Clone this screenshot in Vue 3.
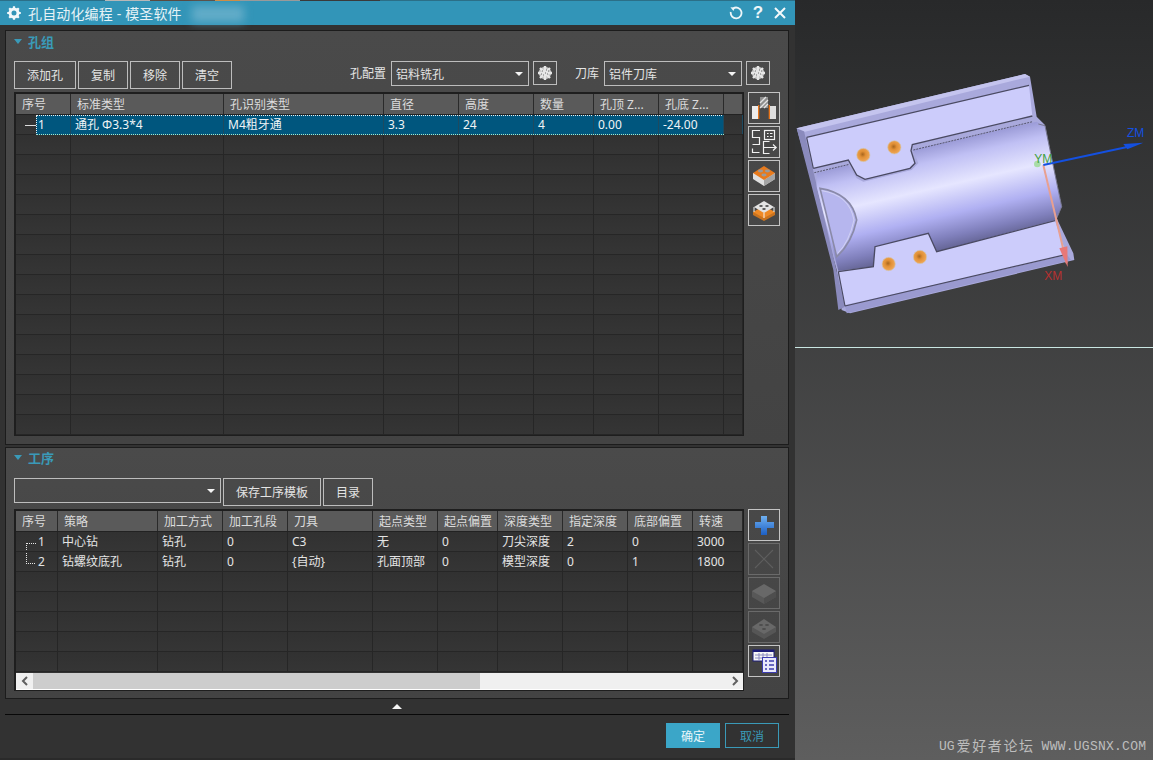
<template>
  <div class="screen">
    <div class="dialog">
      <div class="titlebar">
        <svg class="title-gear" width="16" height="16" viewBox="0 0 16 16">
          <circle cx="8" cy="8" r="4" fill="none" stroke="#f2f8fb" stroke-width="3" />
          <path d="M8 1.2v2.4M8 12.4v2.4M1.2 8h2.4M12.4 8h2.4M3.2 3.2l1.7 1.7M11.1 11.1l1.7 1.7M3.2 12.8l1.7-1.7M11.1 4.9l1.7-1.7" stroke="#f2f8fb" stroke-width="2.2" />
        </svg>
        <span class="title-text">孔自动化编程 - 模圣软件</span>
        <span class="title-blur"></span>
        <div class="title-actions">
          <svg width="14" height="14" viewBox="0 0 14 14">
            <path d="M4.2 2.4A5.4 5.4 0 1 1 1.8 6" fill="none" stroke="#eef6f9" stroke-width="1.8" />
            <path d="M1.4 1.2l4.6 0.2-1.6 3.6z" fill="#eef6f9" />
          </svg>
          <span class="help">?</span>
          <svg width="14" height="14" viewBox="0 0 14 14">
            <path d="M2 2l10 10M12 2L2 12" stroke="#f4f9fb" stroke-width="2" />
          </svg>
        </div>
      </div>

      <section class="panel panel-holes">
        <div class="panel-head"><i class="tri"></i><span>孔组</span></div>
        <div class="toolbar">
          <button v-for="b in holeButtons" :key="b" class="btn" :class="{ wide: b === '添加孔' }">{{ b }}</button>
          <span class="field-label first">孔配置</span>
          <div class="select"><span>铝料铣孔</span><i class="caret"></i></div>
          <button class="gear-btn">
            <svg width="20" height="20" viewBox="0 0 20 20">
              <circle cx="10" cy="10" r="6.2" fill="#c4c4c4" />
              <path d="M10 3v14M3 10h14M5 5l10 10M15 5L5 15" stroke="#e6e6e6" stroke-width="2.4" />
              <path d="M7 8h1M11 7h1M8 12h1M12 11h1M10 10h1M6 11h1M13 8h1" stroke="#6e6e6e" stroke-width="1" />
            </svg>
          </button>
          <span class="field-label second">刀库</span>
          <div class="select"><span>铝件刀库</span><i class="caret"></i></div>
          <button class="gear-btn">
            <svg width="20" height="20" viewBox="0 0 20 20">
              <circle cx="10" cy="10" r="6.2" fill="#c4c4c4" />
              <path d="M10 3v14M3 10h14M5 5l10 10M15 5L5 15" stroke="#e6e6e6" stroke-width="2.4" />
              <path d="M7 8h1M11 7h1M8 12h1M12 11h1M10 10h1M6 11h1M13 8h1" stroke="#6e6e6e" stroke-width="1" />
            </svg>
          </button>
        </div>
        <div class="table-row">
          <div class="grid-table">
            <div class="tr th" :style="{ gridTemplateColumns: holeCols }">
              <div v-for="(h, i) in holeHeads" :key="i" class="cell">{{ h }}</div>
            </div>
            <div
              v-for="(row, r) in holeRows"
              :key="r"
              class="tr td"
              :class="{ selected: r === 0 }"
              :style="{ gridTemplateColumns: holeCols }"
            >
              <div v-for="(c, i) in row" :key="i" class="cell" :class="{ num: i === 0 }">
                <i v-if="r === 0 && i === 0" class="dash"></i>{{ c }}
              </div>
            </div>
          </div>
          <div class="side">
            <button class="side-btn">
              <svg width="30" height="30" viewBox="0 0 30 30">
                <rect x="11" y="4" width="8" height="11" fill="#8e8e8e" />
                <path d="M11 10l6-6M11 15l8-8M15 15l4-4" stroke="#e4e4e4" stroke-width="1.3" />
                <rect x="3" y="13" width="6" height="13" fill="#ececec" />
                <rect x="21" y="13" width="6" height="13" fill="#dedede" />
                <rect x="9" y="12" width="1.3" height="14" fill="#e8751a" />
                <rect x="19.7" y="12" width="1.3" height="14" fill="#e8751a" />
              </svg>
            </button>
            <button class="side-btn">
              <svg width="30" height="30" viewBox="0 0 30 30" fill="none" stroke="#f2f2f2" stroke-width="1.2">
                <path d="M11 3.5H3.5v7h7v7h-7" />
                <path d="M3.5 21.5v4h7" />
                <rect x="15.5" y="3.5" width="10" height="9" />
                <path d="M18 6.5h1.6M21 6.5h2.5M18 9.5h1.6M21 9.5h2.5" />
                <path d="M20.5 14.5h-6v12h6M15 20.5h12M24 17.5l3.2 3-3.2 3" />
              </svg>
            </button>
            <button class="side-btn">
              <svg width="30" height="30" viewBox="0 0 30 30">
                <path d="M4 12v6l11 7 11-7v-6z" fill="#e0e0e0" />
                <path d="M15 19v6l11-7v-6z" fill="#a4a4a4" />
                <path d="M15 5L4 12l11 7 11-7z" fill="#e87a1c" />
                <ellipse cx="11.5" cy="10" rx="2.6" ry="1.4" fill="#9a9a9a" />
                <ellipse cx="18.5" cy="10" rx="2.6" ry="1.4" fill="#9a9a9a" />
                <ellipse cx="15" cy="14" rx="2.6" ry="1.4" fill="#9a9a9a" />
              </svg>
            </button>
            <button class="side-btn">
              <svg width="30" height="30" viewBox="0 0 30 30">
                <path d="M4 17v3l11 6 11-6v-3z" fill="#c9731f" />
                <path d="M15 11L4 17l11 6 11-6z" fill="#ef8a26" />
                <path d="M15 6L5 12l10 6 10-6z" fill="#e4e4e4" />
                <path d="M15 18v5M5 12v5M25 12v5" stroke="#f4f4f4" stroke-width="1" />
                <ellipse cx="12" cy="11" rx="1.8" ry="1" fill="#555" />
                <ellipse cx="18" cy="11" rx="1.8" ry="1" fill="#555" />
                <ellipse cx="15" cy="14" rx="1.8" ry="1" fill="#555" />
              </svg>
            </button>
          </div>
        </div>
      </section>

      <section class="panel panel-steps">
        <div class="panel-head"><i class="tri"></i><span>工序</span></div>
        <div class="toolbar">
          <div class="select template"><span></span><i class="caret"></i></div>
          <button class="btn save">保存工序模板</button>
          <button class="btn">目录</button>
        </div>
        <div class="table-row">
          <div class="grid-table">
            <div class="tr th" :style="{ gridTemplateColumns: stepCols }">
              <div v-for="(h, i) in stepHeads" :key="i" class="cell">{{ h }}</div>
            </div>
            <div v-for="(row, r) in stepRows" :key="r" class="tr td" :style="{ gridTemplateColumns: stepCols }">
              <div v-for="(c, i) in row" :key="i" class="cell" :class="{ num: i === 0 }">
                <i v-if="i === 0 && r === 0" class="branch first-branch"></i>
                <i v-if="i === 0 && r === 1" class="branch last-branch"></i>{{ c }}
              </div>
            </div>
            <div class="hscroll">
              <span class="arrow left">
                <svg width="8" height="10" viewBox="0 0 8 10"><path d="M6 1L2 5l4 4" fill="none" stroke="#606060" stroke-width="2" /></svg>
              </span>
              <span class="thumb"></span>
              <span class="arrow right">
                <svg width="8" height="10" viewBox="0 0 8 10"><path d="M2 1l4 4-4 4" fill="none" stroke="#606060" stroke-width="2" /></svg>
              </span>
            </div>
          </div>
          <div class="side">
            <button class="side-btn">
              <svg width="30" height="30" viewBox="0 0 30 30">
                <defs>
                  <linearGradient id="plusBlue" x1="0" y1="0" x2="0" y2="1">
                    <stop offset="0" stop-color="#6fb0f0" />
                    <stop offset="1" stop-color="#1c5fc4" />
                  </linearGradient>
                </defs>
                <path d="M12 6h6v6h7v6h-7v7h-6v-7H6v-6h6z" fill="url(#plusBlue)" />
              </svg>
            </button>
            <button class="side-btn off">
              <svg width="30" height="30" viewBox="0 0 30 30"><path d="M6 6l18 18M24 6L6 24" stroke="#5e5e5e" stroke-width="1.2" /></svg>
            </button>
            <button class="side-btn off">
              <svg width="30" height="30" viewBox="0 0 30 30">
                <path d="M3 13v6l12 7 12-7v-6z" fill="#585858" />
                <path d="M15 20v6l12-7v-6z" fill="#4e4e4e" />
                <path d="M15 6L3 13l12 7 12-7z" fill="#686868" />
              </svg>
            </button>
            <button class="side-btn off">
              <svg width="30" height="30" viewBox="0 0 30 30">
                <path d="M3 15v5l12 7 12-7v-5z" fill="#565656" />
                <path d="M15 7L3 15l12 7 12-7z" fill="#686868" />
                <ellipse cx="12" cy="13" rx="2" ry="1.1" fill="#4c4c4c" />
                <ellipse cx="18" cy="13" rx="2" ry="1.1" fill="#4c4c4c" />
                <ellipse cx="15" cy="17" rx="2" ry="1.1" fill="#4c4c4c" />
              </svg>
            </button>
            <button class="side-btn">
              <svg width="30" height="30" viewBox="0 0 30 30">
                <rect x="4" y="4" width="21" height="11" fill="#f6f6f6" stroke="#1c1c78" />
                <rect x="4" y="4" width="21" height="2" fill="#1c1c78" />
                <path d="M6 9h17M6 12h17M10 7v7M14 7v7M18 7v7" stroke="#8a8ac0" stroke-width="1" />
                <rect x="13.5" y="11.5" width="14" height="15" fill="#e8e8fa" stroke="#3c3cb0" />
                <path d="M16 15h2M16 19h2M16 23h2M20 15h5M20 19h5M20 23h5" stroke="#3c3cb0" stroke-width="1.4" />
              </svg>
            </button>
          </div>
        </div>
      </section>

      <div class="collapse"><i></i></div>
      <div class="footer">
        <button class="ok">确定</button>
        <button class="cancel">取消</button>
      </div>
    </div>

    <div class="viewport">
      <svg class="model" width="358" height="300" viewBox="0 0 1074 900">
        <defs>
          <linearGradient id="barrel" gradientUnits="userSpaceOnUse" x1="395" y1="235" x2="475" y2="585">
            <stop offset="0" stop-color="#8888c8" />
            <stop offset="0.2" stop-color="#c0c0f4" />
            <stop offset="0.42" stop-color="#e6e6ff" />
            <stop offset="0.66" stop-color="#b0b0f2" />
            <stop offset="0.84" stop-color="#8080bc" />
            <stop offset="1" stop-color="#55557f" />
          </linearGradient>
          <radialGradient id="hole" cx="0.45" cy="0.45" r="0.55">
            <stop offset="0" stop-color="#a8661f" />
            <stop offset="0.4" stop-color="#e08f35" />
            <stop offset="1" stop-color="#f0a858" />
          </radialGradient>
        </defs>
        <path d="M5 205L690 42l15 8 20 120 25 25 50 245-15 35 50 105 3 20-673 160-25-10-15-120z" fill="#a9a9dc" />
        <path d="M5 205l20 0 125 535-20 10-15-120z" fill="#8a8abc" />
        <path d="M5 205L690 42l15 8L30 215z" fill="#c4c4ee" />
        <path d="M150 738l665-155 13 17-673 160z" fill="#9a9ad0" />
        <path d="M35 232L702 76l10 92-360 86-4 18 12 38-15 15-135 33-25-13-25-45-105 25z" fill="#ccccfb" />
        <path d="M65 340l95-25 25 40 20 10 145-35 20-20-15-40 370-85 25 15 50 240-20 40-355 95-25-55-160 40-5 60-105 12-65-252z" fill="url(#barrel)" />
        <path d="M235 620l5-60 160-40 25 55 355-93 35 103-665 150-20-100z" fill="#ccccfb" />
        <path d="M75 385Q170 400 185 480 170 550 125 590z" fill="#b6b6ee" stroke="#8a8aa8" stroke-width="5" />
        <path d="M80 392Q163 405 177 480 163 545 128 580" fill="none" stroke="#e0e0f6" stroke-width="2" />
        <path d="M35 232L702 76M150 738L815 583M35 232l20 93M130 635l20 103" fill="none" stroke="#4a4a62" stroke-width="3.5" />
        <path d="M55 325l105-25 25 45 25 13 135-33 15-15-12-38 4-18 360-86" fill="none" stroke="#4a4a62" stroke-width="4" />
        <path d="M58 338l105-25M355 270l358-85" fill="none" stroke="#55556e" stroke-width="3" stroke-dasharray="6 3" />
        <path d="M130 635l105-15 5-60 160-40 25 55 355-93" fill="none" stroke="#4a4a62" stroke-width="4" />
        <path d="M730 192l20 5 50 243-15 35" fill="none" stroke="#77778f" stroke-width="3" />
        <g stroke="#cfc6ba" stroke-width="2">
          <circle cx="205" cy="285" r="20" fill="url(#hole)" />
          <circle cx="298" cy="262" r="20" fill="url(#hole)" />
          <circle cx="281" cy="612" r="20" fill="url(#hole)" />
          <circle cx="375" cy="591" r="20" fill="url(#hole)" />
        </g>
        <circle cx="727" cy="312" r="10" fill="#a8dca8" />
        <path d="M745 315L815 610" stroke="#e8a090" stroke-width="6" />
        <path d="M793 565l24 -6 1 62z" fill="#e87878" />
        <path d="M745 315L1000 260" stroke="#1450e0" stroke-width="6" />
        <path d="M985 252l60-4-48 20z" fill="#1450e0" />
        <text x="996" y="232" class="axis" fill="#1450e0">ZM</text>
        <text x="718" y="310" class="axis" fill="#3f9f3f">YM</text>
        <text x="748" y="660" class="axis" fill="#b83030">XM</text>
        <line x1="0" y1="862.5" x2="1074" y2="862.5" stroke="#c9e6e2" stroke-width="3" />
      </svg>
      <div class="watermark"><span>UG</span><span class="wm-cjk">爱好者论坛</span><span class="wm-latin">WWW.UGSNX.COM</span></div>
    </div>
  </div>
</template>

<script setup>
const holeButtons = ['添加孔', '复制', '移除', '清空']

const toCols = (widths) => widths.map((w) => w + 'px').join(' ')

const holeCols = toCols([55, 153, 160, 75, 75, 60, 65, 65, 19])
const holeHeads = ['序号', '标准类型', '孔识别类型', '直径', '高度', '数量', '孔顶 Z...', '孔底 Z...', '']
const holeRows = [['1', '通孔 Φ3.3*4', 'M4粗牙通', '3.3', '24', '4', '0.00', '-24.00', '']]
for (let i = 0; i < 15; i++) holeRows.push(Array(9).fill(''))

const stepCols = toCols([42, 100, 65, 65, 85, 65, 60, 65, 65, 65, 50])
const stepHeads = ['序号', '策略', '加工方式', '加工孔段', '刀具', '起点类型', '起点偏置', '深度类型', '指定深度', '底部偏置', '转速']
const stepRows = [
  ['1', '中心钻', '钻孔', '0', 'C3', '无', '0', '刀尖深度', '2', '0', '3000'],
  ['2', '钻螺纹底孔', '钻孔', '0', '{自动}', '孔面顶部', '0', '模型深度', '0', '1', '1800']
]
for (let i = 0; i < 5; i++) stepRows.push(Array(11).fill(''))
</script>

<style>
html,
body {
  margin: 0;
  background: #323232;
  overflow: hidden;
}
</style>

<style scoped>
.screen {
  display: grid;
  grid-template-columns: 795px 358px;
  width: 1153px;
  height: 760px;
  overflow: hidden;
  font-family: "Noto Sans", "Noto Sans CJK SC", sans-serif;
  font-size: 12px;
  color: #e4e4e4;
}

.dialog {
  display: flex;
  flex-direction: column;
  background: #323232;
  padding: 0 6px 0 5px;
  box-sizing: border-box;
  height: 760px;
  border-bottom: 2px solid #2a2a2a;
}

.titlebar {
  position: relative;
  display: flex;
  align-items: center;
  height: 25px;
  margin: 0 -6px 0 -5px;
  padding: 1px 8px 0 6px;
  background: #3295b8;
  box-sizing: border-box;
  flex: none;
}

/* 顶部一像素：露出的后面窗口 */
.titlebar::before {
  content: "";
  position: absolute;
  left: 0;
  right: 0;
  top: 0;
  height: 1px;
  background: linear-gradient(90deg, #2b6f88 0 105px, #b8b8b8 105px 150px, #5a4a40 150px 215px, #d98a3a 215px 240px, #9a9a9a 240px 300px, #3a3a3a 300px 380px, #2b6f88 380px);
}

.title-text {
  margin-left: 6px;
  font-size: 14px;
  letter-spacing: 0.15px;
  color: #e6f2f6;
}

.title-blur {
  position: absolute;
  left: 192px;
  top: 6px;
  width: 52px;
  height: 16px;
  background: #62acc8;
  filter: blur(4px);
}

.title-actions {
  margin-left: auto;
  display: flex;
  align-items: center;
  gap: 9px;
}

.help {
  font-family: "Liberation Sans", sans-serif;
  font-weight: 700;
  font-size: 17px;
  line-height: 20px;
  color: #eef6f9;
  width: 12px;
  text-align: center;
}

.panel {
  border: 1px solid #1c1c1c;
  background: linear-gradient(#4a4a4a, #434343);
  padding: 0 8px;
  box-sizing: border-box;
  flex: none;
}

.panel-holes {
  height: 415px;
  margin-top: 5px;
}

.panel-steps {
  height: 252px;
  margin-top: 2px;
}

.panel-head {
  display: flex;
  align-items: center;
  gap: 6px;
  height: 30px;
  font-size: 13px;
  font-weight: 700;
  color: #3a9ab8;
  box-sizing: border-box;
  padding-bottom: 9px;
}

.panel-steps .panel-head {
  padding-bottom: 11px;
}

.tri {
  width: 0;
  height: 0;
  border-left: 4px solid transparent;
  border-right: 4px solid transparent;
  border-top: 5px solid #3a9ab8;
}

.toolbar {
  display: flex;
  align-items: flex-start;
  gap: 2px;
  height: 28px;
  padding-right: 10px;
  margin-bottom: 3px;
}

button {
  font-family: inherit;
  padding: 0;
  cursor: default;
}

.btn {
  width: 50px;
  height: 28px;
  background: transparent;
  border: 1px solid #bdbdbd;
  color: #e4e4e4;
  font-size: 12px;
}

.btn.wide {
  width: 62px;
}

.btn.save {
  width: 98px;
}

.field-label {
  line-height: 25px;
  margin-right: 3px;
}

.field-label.first {
  margin-left: auto;
}

.field-label.second {
  margin-left: 16px;
}

.select {
  position: relative;
  display: flex;
  align-items: center;
  justify-content: space-between;
  width: 138px;
  height: 25px;
  padding: 0 6px 0 4px;
  border: 1px solid #bdbdbd;
  box-sizing: border-box;
  margin-right: 2px;
}

.select.template {
  width: 207px;
  margin-right: 0;
}

.caret {
  width: 0;
  height: 0;
  border-left: 4px solid transparent;
  border-right: 4px solid transparent;
  border-top: 4px solid #f4f4f4;
  margin-right: -1px;
}

.gear-btn {
  display: flex;
  align-items: center;
  justify-content: center;
  width: 24px;
  height: 24px;
  background: transparent;
  border: 1px solid #bdbdbd;
}

.table-row {
  display: flex;
  gap: 4px;
  align-items: flex-start;
}

.grid-table {
  width: 730px;
  box-sizing: border-box;
  border-style: solid;
  border-color: #1e1e1e;
  border-width: 2px 1px 1px 2px;
  background: #323232;
  flex: none;
}

.tr {
  display: grid;
  height: 20px;
  box-sizing: border-box;
  position: relative;
}

.cell {
  position: relative;
  z-index: 1;
  box-sizing: border-box;
  padding-left: 4px;
  line-height: 20px;
  white-space: nowrap;
  overflow: hidden;
  border-right: 1px solid #262626;
}

.th {
  height: 21px;
  background: #5a5a5a;
  border-bottom: 1px solid #222;
}

.th .cell {
  padding-left: 6px;
  line-height: 21px;
  color: #dcdcdc;
  border-right: 1px solid #2a2a2a;
}

.td {
  border-bottom: 1px solid #262626;
  background: linear-gradient(#313131, #353535);
}

.td .num {
  padding-left: 22px;
}

.selected::before {
  content: "";
  position: absolute;
  left: 20px;
  right: 19px;
  top: 0;
  bottom: -1px;
  background: #00567e;
  border-top: 1px dotted #f0f0f0;
  border-bottom: 1px dotted #a8e8c8;
  border-left: 1px dotted #f0f0f0;
  border-right: 1px dotted #a8e8c8;
  box-sizing: border-box;
}

.selected .cell {
  border-right-color: #1d4a60;
  color: #f0f4f6;
}

.dash {
  position: absolute;
  left: 9px;
  top: 10px;
  width: 11px;
  border-top: 1px solid #dcdcdc;
}

.branch {
  position: absolute;
  left: 10px;
  width: 9px;
  border-top: 1px dotted #e8e8e8;
}

.first-branch {
  top: 11px;
  height: 10px;
  border-left: 1px dotted #e8e8e8;
}

.last-branch {
  top: 11px;
}

.last-branch::before {
  content: "";
  position: absolute;
  left: 0;
  top: -11px;
  height: 11px;
  border-left: 1px dotted #e8e8e8;
}

.hscroll {
  display: flex;
  align-items: stretch;
  height: 17px;
  background: #f0f0f0;
  margin-top: 1px;
  border-bottom: 1px solid #fff;
  box-sizing: border-box;
}

.arrow {
  display: flex;
  align-items: center;
  justify-content: center;
  width: 17px;
  flex: none;
}

.arrow.right {
  margin-left: auto;
}

.thumb {
  width: 447px;
  background: #cdcdcd;
}

.side {
  display: flex;
  flex-direction: column;
  gap: 2px;
}

.side-btn {
  display: flex;
  align-items: center;
  justify-content: center;
  width: 32px;
  height: 32px;
  background: transparent;
  border: 1px solid #c4c4c4;
}

.side-btn.off {
  border-color: #6a6a6a;
}

.collapse {
  display: flex;
  align-items: center;
  justify-content: center;
  height: 15px;
  border-bottom: 1px solid #080808;
  flex: none;
  box-sizing: content-box;
}

.collapse i {
  width: 0;
  height: 0;
  border-left: 5px solid transparent;
  border-right: 5px solid transparent;
  border-bottom: 5px solid #f4f4f4;
}

.footer {
  display: flex;
  justify-content: flex-end;
  gap: 5px;
  padding: 8px 10px 0 0;
}

.ok,
.cancel {
  width: 54px;
  height: 25px;
  font-size: 12px;
}

.ok {
  background: #3ba6c8;
  border: none;
  color: #e8f6fa;
}

.cancel {
  background: transparent;
  border: 1px solid #3a9ab8;
  color: #3a9ab8;
}

.viewport {
  position: relative;
  height: 760px;
  padding-top: 60px;
  box-sizing: border-box;
  background: linear-gradient(#28292a, #5e5e5e);
}

.model {
  display: block;
}

.axis {
  font-family: "Liberation Sans", sans-serif;
  font-size: 36px;
}

.watermark {
  position: absolute;
  left: 144px;
  bottom: 4px;
  display: flex;
  align-items: center;
  font-family: "Liberation Mono", "Noto Sans CJK SC", monospace;
  font-size: 13px;
  line-height: 18px;
  white-space: nowrap;
  color: #bdbdbd;
}

.wm-cjk {
  font-size: 14px;
  letter-spacing: 1.6px;
  margin: 0 7px 0 2px;
}

.wm-latin {
  letter-spacing: 0.25px;
}
</style>
